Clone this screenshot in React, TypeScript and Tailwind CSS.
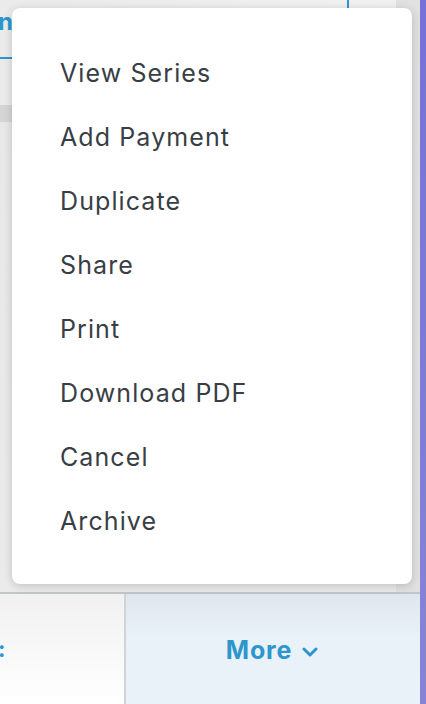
const items = [
  "View Series",
  "Add Payment",
  "Duplicate",
  "Share",
  "Print",
  "Download PDF",
  "Cancel",
  "Archive",
];

export default function App() {
  return (
    <div
      className="relative flex h-[704px] w-[426px] overflow-hidden bg-[#e1e1e1]"
      style={{ fontFamily: "Inter, 'Open Sans', sans-serif" }}
    >
      {/* page behind the menu */}
      <div className="flex w-[420px] flex-col">
        <div className="flex h-[592px] w-[396px] flex-col bg-[#ececec]">
          {/* tabs header */}
          <div className="flex h-[105px] flex-col bg-gradient-to-r from-[#ebebeb] to-[#f1f1f1]">
            <div className="flex h-[59px] items-start">
              <div className="flex h-[59px] w-[12px] flex-col overflow-hidden">
                <div className="-ml-[2px] pt-[10px] text-[24px] font-bold leading-[24px] text-[#2d96cd]">
                  n
                </div>
                <div className="mt-auto h-[2px] w-[12px] bg-[#2d96cd]" />
              </div>
              <div className="ml-[335px] h-[9px] w-[2px] bg-[#2d96cd]" />
            </div>
          </div>
          <div className="h-[17px] bg-[#d5d5d5]" />
          <div className="flex-1 bg-gradient-to-b from-[#e8e8e8] to-[#ebebeb]" />
        </div>
        <div className="h-[2px] w-[420px] bg-[#c2c6ca]" />
        {/* bottom action bar */}
        <div className="flex flex-1">
          <div className="flex w-[124px] items-center bg-gradient-to-b from-[#f1f1f1] to-white">
            <span className="-ml-[2px] text-[22px] font-bold text-[#2d96cd]">:</span>
          </div>
          <div className="w-[2px] bg-[#d3d3d3]" />
          <div className="flex flex-1 items-center justify-center gap-[10px] bg-gradient-to-b from-[#dfe6ee] to-[#e9f1f9] to-40% pt-[4px] pr-[2px]">
            <span className="text-[25px] font-bold tracking-[0.8px] text-[#2d96cd]">More</span>
            <svg width="16" height="12" viewBox="0 0 16 12" className="mt-[2px]">
              <path
                d="M2 3l6 6 6-6"
                fill="none"
                stroke="#2d96cd"
                strokeWidth="3"
                strokeLinecap="round"
                strokeLinejoin="round"
              />
            </svg>
          </div>
        </div>
      </div>
      <div className="w-[6px] bg-gradient-to-b from-[#7572d8] to-[#8784d6]" />

      {/* dropdown menu */}
      <div className="absolute left-[12px] top-[8px] w-[400px] rounded-[8px] bg-white py-[32px] shadow-[0_2px_10px_rgba(0,0,0,0.18)]">
        {items.map((label) => (
          <div
            key={label}
            className="flex h-[64px] items-center pl-[48px] pt-[3px] text-[25px] tracking-[1.1px] text-[#383e45]"
          >
            {label}
          </div>
        ))}
      </div>
    </div>
  );
}
